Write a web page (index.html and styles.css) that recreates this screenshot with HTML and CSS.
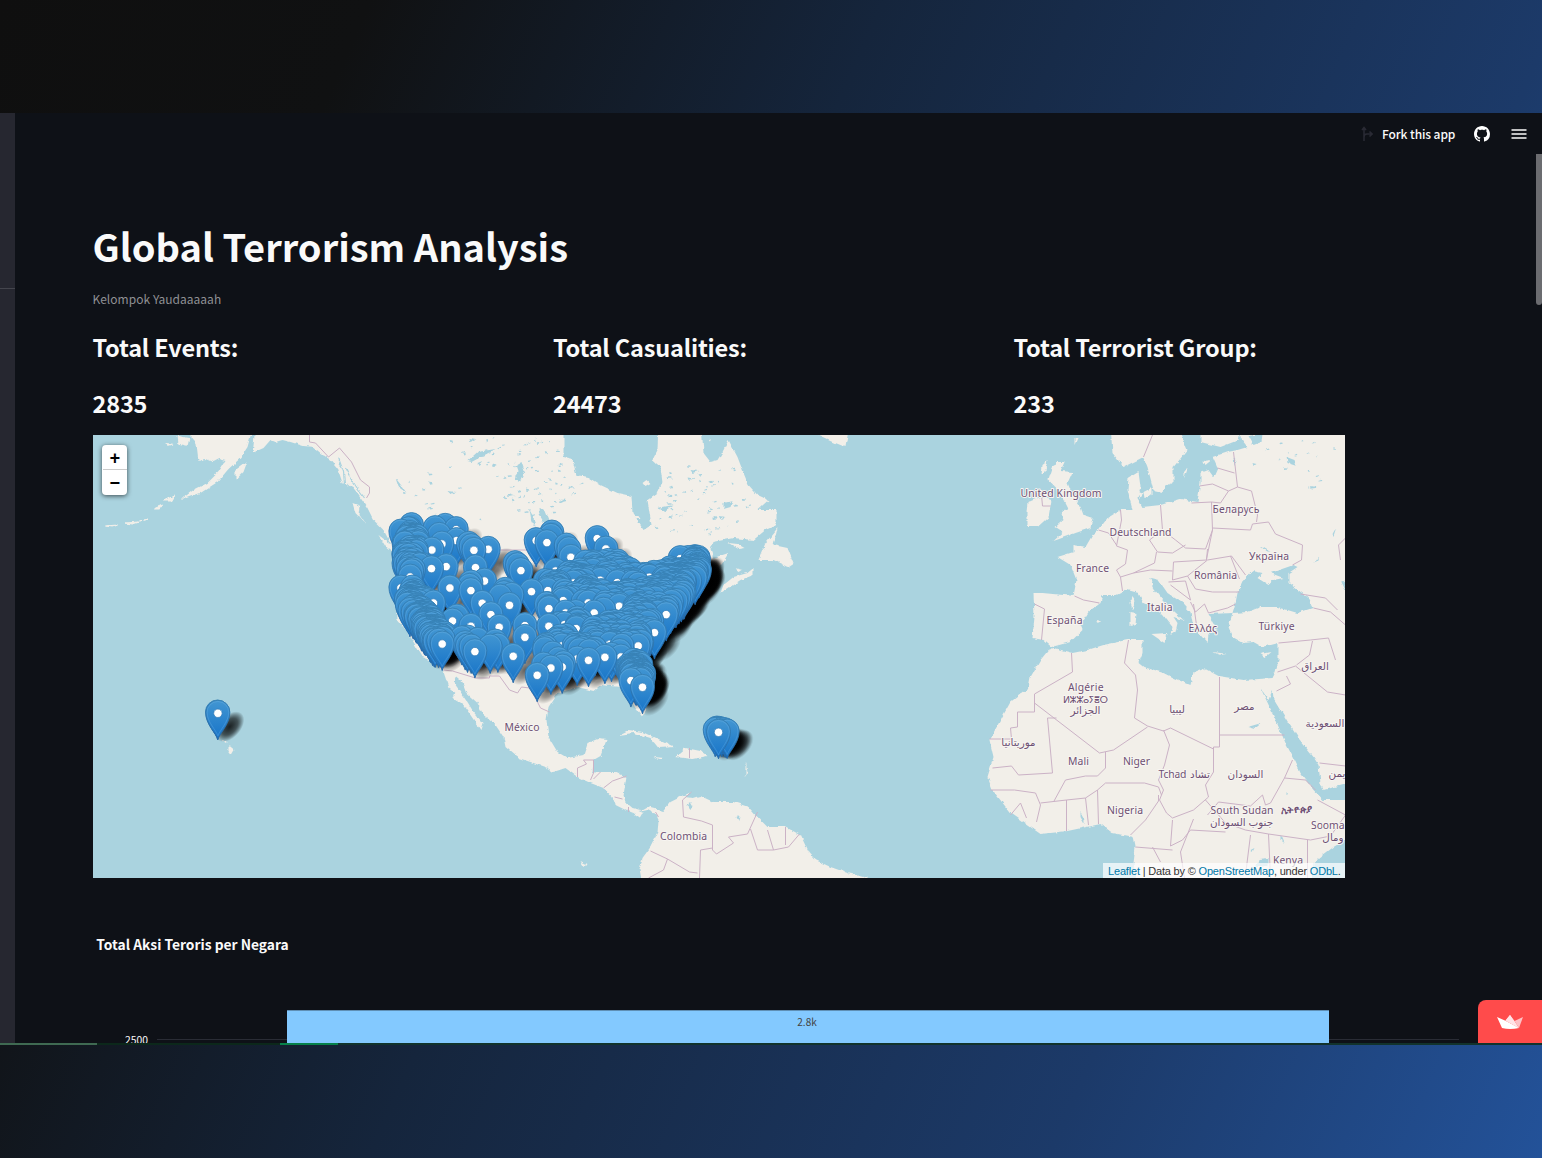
FILE: index.html
```html
<!DOCTYPE html>
<html lang="en">
<head>
<meta charset="utf-8">
<title>Global Terrorism Analysis</title>
<link rel="stylesheet" href="styles.css">
</head>
<body>
<div class="app">
  <aside class="sidebar"><div class="sidebar-rule"></div></aside>
  <div class="content">
    <header class="toolbar">
      <svg class="fork" viewBox="0 0 12 16"><path d="M3 15V2M1 4l2-2.500L5 4M3 11q0-3 3-3h4M8.500 5.500L11 8l-2.500 2.500"/></svg>
      <span class="fork-label">Fork this app</span>
      <svg class="github" viewBox="0 0 16 16"><path d="M8 0C3.580 0 0 3.580 0 8c0 3.540 2.290 6.530 5.470 7.590.4.070.55-.17.55-.38 0-.19-.01-.82-.01-1.490-2.010.37-2.530-.49-2.690-.94-.09-.23-.48-.94-.82-1.130-.28-.15-.68-.52-.01-.53.63-.01 1.080.58 1.230.82.72 1.210 1.870.87 2.330.66.07-.52.28-.87.51-1.070-1.780-.2-3.640-.89-3.640-3.950 0-.87.31-1.590.82-2.150-.08-.2-.36-1.020.08-2.120 0 0 .67-.21 2.200.82.64-.18 1.320-.27 2-.27s1.360.09 2 .27c1.530-1.040 2.200-.82 2.200-.82.44 1.100.16 1.920.08 2.120.51.56.82 1.270.82 2.150 0 3.070-1.870 3.750-3.650 3.950.29.25.54.73.54 1.480 0 1.070-.01 1.930-.01 2.200 0 .21.15.46.55.38A8.010 8.010 0 0 0 16 8c0-4.420-3.580-8-8-8z"/></svg>
      <svg class="menu" viewBox="0 0 16 12"><path d="M.5 2h15M.5 6h15M.5 10h15"/></svg>
    </header>
    <main class="main">
      <h1>Global Terrorism Analysis</h1>
      <p class="byline">Kelompok Yaudaaaaah</p>
      <section class="stats">
        <div><h3>Total Events:</h3><h3 class="num">2835</h3></div>
        <div><h3>Total Casualities:</h3><h3 class="num">24473</h3></div>
        <div><h3>Total Terrorist Group:</h3><h3 class="num">233</h3></div>
      </section>
      <div class="map">
        <svg class="map-canvas" viewBox="92.500 435 1252.500 443.500">
          <defs>
            <linearGradient id="pinFill" x1="0" y1="0" x2="0" y2="1"><stop offset="0" stop-color="#4296d2"/><stop offset="1" stop-color="#1673c8"/></linearGradient>
            <linearGradient id="pinEdge" x1="0" y1="0" x2="0" y2="1"><stop offset="0" stop-color="#3680b4"/><stop offset="1" stop-color="#2366a6"/></linearGradient>
            <radialGradient id="shade"><stop offset="0" stop-color="#000" stop-opacity=".6"/><stop offset=".55" stop-color="#000" stop-opacity=".38"/><stop offset="1" stop-color="#000" stop-opacity="0"/></radialGradient>
            <filter id="rough" x="0" y="0" width="1" height="1"><feTurbulence type="fractalNoise" baseFrequency=".16" numOctaves="3" seed="4"/><feDisplacementMap in="SourceGraphic" scale="4" xChannelSelector="R" yChannelSelector="G"/></filter>
            <g id="pinBody"><path d="M0 0C-1-6-12-15-12-27.500A12 12 0 0 1 12-27.500C12-15 1-6 0 0Z" fill="url(#pinFill)" stroke="url(#pinEdge)" stroke-width=".9"/><path d="M0-4C-2-10-10.800-18-10.800-27.500A10.800 10.800 0 0 1 10.800-27.500C10.800-18 2-10 0-4Z" fill="none" stroke="#8cc4ee" stroke-opacity=".3" stroke-width=".8"/></g>
            <g id="pin"><use href="#pinBody"/><circle cy="-26.500" r="4.200" fill="#fff" stroke="#2f79b5" stroke-width=".7"/></g>
            <ellipse id="cast" cx="12" cy="-13" rx="18" ry="11" transform="rotate(-48 12 -13)" fill="url(#shade)"/>
          </defs>
          <rect x="92" y="435" width="1254" height="444" fill="#aad3df"/>
          <g filter="url(#rough)">
            <g class="land">
              <path d="M190 425L190 437 196 444 198 461 205 459 212 462 218 459 225 461 218 472 207 483 193 490 180 500 200 493 217 482 228 469 240 458 247 447 250 436 254 436 252 453 263 448 270 440 275 442 282 440 290 442 303 446 313 447 320 453 330 460 337 468 342 483 353 488 360 498 367 508 373 520 383 530 390 543 395 580 397 620 407 632 422 657 435 662 443 672 448 687 455 693 453 699 463 705 472 718 480 730 482 723 473 712 467 702 460 692 453 682 455 676 462 682 466 693 477 703 483 715 495 725 503 737 505 747 518 758 533 763 547 768 553 772 565 768 577 777 590 783 603 788 612 797 615 805 625 810 633 813 640 818 643 813 638 811 647 809 655 813 658 820 657 833 650 847 642 858 639 870 643 890 868 890 868 878 847 873 830 867 815 860 808 852 800 835 785 827 767 827 755 815 748 807 733 802 713 802 700 796 693 798 685 797 691 792 680 797 670 802 662 812 655 808 647 806 640 810 632 808 625 802 623 795 626 777 615 772 597 772 592 773 593 760 600 756 606 740 597 739 587 743 583 755 567 758 557 752 548 737 546 720 548 707 557 693 577 687 593 691 600 685 620 687 628 697 635 708 642 717 645 712 642 695 645 665 660 635 680 610 700 585 713 575 722 563 728 553 713 558 710 550 713 542 733 538 753 540 765 530 776 525 776 510 757 510 768 500 757 495 748 485 743 473 737 457 728 440 722 452 717 460 710 462 703 453 701 425Z"/>
              <path d="M777 528L773 545 787 548 793 563 787 567 773 560 758 560 765 543ZM720 593L723 585 733 577 747 573 753 568 753 575 740 580 728 588ZM728 543l9 1 7 4-6 1zM734 568l8 2-3 2zM818 425V435L835 443 845 447 849 425ZM352 503l8 3-1 9 6 9-10-11zM378 535l12 9 6 12-10-8zM235 470l12-9-4 11-8 8zM166 443l7 1-6 2zM177 436l12 2-2 8-9-2zM222 740l4 1-1 2zM228 745l6 5-3 5-3-4zM207 733l3 2z"/>
              <path d="M618 735L628 730 643 732 660 740 675 747 658 748 650 738 633 733ZM675 757L685 748 700 751 707 756 692 759ZM653 757l11 1-5 2zM655 718l1 5zM678 730l2 4zM745 763l2 8-2 6zM748 785l1 7z"/>
              <path d="M163 501l10-5-3 5zM153 509l9-4-3 4zM105 526l12-1-5 2zM125 523l14-1-7 2zM140 521l8-2z" stroke="#f2efe9"/>
              <path d="M1055 462L1064 462 1060 471 1072 472 1067 483 1072 495 1080 507 1083 515 1092 518 1090 528 1075 533 1067 536 1053 541 1063 532 1055 527 1063 520 1060 513 1068 508 1063 498 1055 487 1048 480 1052 468ZM1028 502L1040 497 1051 500 1048 517 1037 527 1027 527 1027 513ZM1042 465l5-4-2 8-4 6zM1074 438l3 0-3 7z"/>
              <path d="M1110 425L1112 453 1123 467 1133 462 1143 457 1147 467 1153 490 1162 492 1167 485 1173 483 1173 467 1187 450 1177 425ZM1200 425V442L1220 447 1238 440 1242 425ZM1184 470l3-2-3 9zM1203 461l8-1-6 5zM1143 492l8-4 0 8-7 2zM1136 490l7 3-4 5z"/>
              <path d="M1033 593L1042 593 1073 596 1076 580 1070 565 1057 557 1073 552 1073 545 1085 547 1092 535 1098 530 1107 518 1120 510 1132 510 1127 490 1128 478 1138 472 1140 487 1137 498 1142 507 1160 505 1180 499 1197 502 1200 483 1200 473 1208 470 1213 477 1217 468 1212 457 1227 452 1237 450 1247 447 1240 438 1242 425 1360 425 1360 835 1345 840 1333 847 1320 857 1313 863 1310 890 1137 890 1133 863 1135 847 1133 837 1112 833 1100 824 1067 831 1040 834 1010 813 992 790 987 777 993 757 989 740 1000 720 1010 702 1028 688 1030 677 1040 660 1048 650 1053 648 1072 653 1087 650 1103 645 1127 640 1142 640 1142 653 1138 663 1143 667 1163 673 1173 678 1190 685 1193 672 1203 668 1218 676 1243 680 1272 678 1275 672 1278 660 1278 643 1262 647 1253 642 1243 643 1232 637 1228 627 1232 613 1208 614 1217 630 1208 633 1207 643 1198 633 1192 623 1190 612 1182 603 1167 593 1158 580 1150 578 1152 587 1160 597 1167 605 1183 620 1173 617 1177 623 1175 632 1170 635 1172 627 1160 612 1143 603 1138 593 1127 590 1117 595 1102 595 1100 602 1088 612 1080 625 1082 630 1070 642 1051 647 1043 640 1032 638 1034 617Z"/>
              <path d="M1132 597l3 5-3 7-2-6zM1130 612l6 1-1 12-5 1zM1151 634l16-1-3 10zM1212 652l14 2-6 1zM1260 654l10-2-6 5zM1096 621l5 1-4 2zM985 698l1 2zM995 700l2-2zM1000 694l3-3zM580 861l6 3-2 3z"/>
            </g>
            <g fill="#aad3df">
              <path d="M563 425V458L572 460 576 475 587 477 600 485 617 493 631 496 632 513 643 530 651 525 647 500 657 493 662 483 660 467 652 460 657 450 658 425Z"/>
              <path d="M538 508l6 2 4 10-3 5-6-10zM529 510l4 7 2 10-4-5zM467 461l10-9 18-3-9 5-15 8zM516 465l5-3 3 9-5 11-4-2 3-9zM395 478l7 9 4 6-8-6zM447 491l9 1-6 2zM477 463l5-2-4 4zM470 438l5 1-4 2zM657 508l16-3-9 6zM723 503l9-2-2 6-7 2zM690 470l8 1-6 2zM670 453l5-2zM718 516l7 1-5 2zM661 465l4 3zM507 493l6 2-5 1zM484 478l3 4zM480 497l4 3zM510 447l4 5z"/>
              <path d="M1252 571L1262 573 1257 578 1268 585 1273 580 1283 578 1270 573 1293 565 1297 567 1288 573 1288 583 1307 597 1312 608 1297 613 1277 607 1260 607 1247 612 1232 613 1235 603 1237 593 1243 580Z"/>
              <path d="M1260 688L1268 700 1272 690 1273 698 1288 723 1297 737 1313 757 1318 765 1320 783 1323 790 1360 780V800L1323 800 1313 790 1300 773 1295 762 1285 743 1273 715Z"/>
              <path d="M1286 457l8 3 2 6-9-3zM1252 463l4 1-3 2zM1248 436l14-2-1 8-8 3zM1341 582l12-5v30zM1318 556l-5 7 3-1zM1332 535l4-7-3 9zM1260 546l10 6-5-1zM1233 457l3 3-2 5zM1247 727l14-4-7 6zM1285 792l3 2-3 1zM1080 812l4 7 0 5-4-7zM1258 859l10-1 0 7-12 1zM1280 834l4 9-4-3zM1250 850l4-2-2 4zM689 801l3 5-2 4-3-4zM736 817l3-2-1 6z"/>
              <path id="lakes"/>
            </g>
            <path class="land" d="M642 483l4-3 4 4-5 3zM632 515l6 0 2 3-5 0zM709 440l2-1 0 3z"/>
            <path d="M338 458l5 14 1 12M345 468l6 12M350 478l8 12 6 8M347 484l10 10" fill="none" stroke="#aad3df" stroke-width="1.200"/>
          </g>
          <g class="border">
            <path d="M309 435V442L315 443 328 457 339 448 351 462 360 480 369 487V493L366 498M490 550H540M443 670L452 671 475 678H489V676L499 676 509 690 517 693 521 687 529 688 536 700 540 708 549 712M593 760L583 760 586 764 577 768 577 777M593 760V773L590 780M593 779L600 772M603 788L612 781 626 776M614 797L622 799M628 807V812M655 812L658 817M691 792L682 800 683 817 701 821 712 825 712 850 716 854 733 843 728 837 747 834 757 812M712 848L700 850 699 878M650 851L667 859 689 872 697 873M667 859L663 870 648 878M750 829L757 850 773 850 767 830M773 850L788 847 799 834M785 827V845M689 748V758"/>
            <path d="M1041 495L1042 506 1050 506M1152 435L1143 457M1120 510L1121 520 1116 546 1127 550 1125 564M1098 530L1108 533 1116 545M1160 505L1162 530 1149 540 1157 552 1172 553 1185 545M1162 530L1175 540 1185 548 1205 549 1212 530 1211 502 1191 503M1207 549L1206 560 1173 562 1172 580M1125 564L1116 570 1120 577 1133 573 1154 563 1156 552M1120 577L1122 591M1133 573L1150 570 1172 571M1199 486L1212 484 1228 491 1237 487 1251 491 1257 515 1256 522M1237 487L1233 452M1217 468L1234 473M1228 491L1220 503 1211 502M1212 528L1250 530 1252 524 1268 522 1275 534 1302 545 1301 560 1292 565M1206 559L1212 530M1207 560L1231 556 1245 575M1230 556L1239 579M1172 580L1187 576 1207 560M1187 576L1195 589 1212 592 1239 592M1168 582L1185 581 1190 600 1170 585M1190 602L1195 612 1204 604 1208 613 1227 608 1235 604M1193 604L1196 625M1074 596L1083 600 1099 603M1034 604L1044 609 1041 640M1300 594L1325 598 1337 610M1313 608L1330 612 1345 625M1278 643L1310 640 1328 638 1335 660M1128 640L1124 663 1135 675 1137 690 1134 718 1147 726 1163 731 1170 728 1213 749V747L1219 747V677M1219 735H1284M1213 749V772L1205 785 1208 797 1193 810 1172 818 1166 813 1159 800 1163 790 1158 780 1164 765 1169 745 1163 730M1147 727L1113 750 1099 753 1034 703M1105 752V768L1097 776 1085 776 1065 780 1053 802M1034 703V712H1017V727L1010 728 1011 739H989M1034 703V694L1072 672 1071 653M1056 718H1047L1052 773 1018 775 1011 766 992 768M990 790L1014 790 1035 793 1040 805 1036 822M1010 815L1020 803 1026 818M1040 803L1066 800 1066 831M1066 800L1085 798 1088 825M1085 798L1097 790 1098 824M1097 790L1105 783 1144 783 1158 787 1161 795M1158 795L1158 801 1145 820 1130 835M1205 800L1225 823 1245 830 1268 834 1270 878M1172 820L1170 846 1182 840M1135 847L1172 850M1182 840L1190 830 1225 832M1152 847L1160 862M1207 815L1218 802 1250 806 1262 795 1265 805 1270 803M1270 803L1284 778 1305 780 1315 790M1284 778L1292 760M1268 834L1310 840 1330 836 1345 815 1317 800M1277 672L1295 666 1327 692 1345 695M1296 665L1309 655 1312 641M1319 763L1345 766M1250 835L1245 875M1307 840V878M1193 819L1180 852 1184 878M1276 691L1290 684 1286 676M1345 538L1338 545 1340 560"/>
          </g>
          <g id="shadows"></g>
          <g id="pins"></g>
          <g class="labels" transform="translate(-.5 -.5)">
            <text x="1020.500" y="497.500" textLength="81">United Kingdom</text><text x="1109.500" y="536" textLength="62">Deutschland</text><text x="1212.500" y="513.500" textLength="47">Беларусь</text><text x="1249" y="560.500" textLength="40">Україна</text><text x="1194" y="579.500" textLength="43">România</text><text x="1076" y="572.500" textLength="33">France</text><text x="1147" y="611.500" textLength="25.500">Italia</text><text x="1046.500" y="624.500" textLength="36">España</text><text x="1188.500" y="632.500" textLength="28.500">Ελλάς</text><text x="1258.500" y="630.500" textLength="36">Türkiye</text>
            <text x="1068" y="691.500" textLength="35.500">Algérie</text><text x="1063" y="703" textLength="45" class="tif">ⵍⵣⵣⴰⵢⴻⵔ</text><text x="1085.500" y="714.500" class="mid">الجزائر</text><text x="1177" y="713.500" class="mid">ليبيا</text><text x="1244.500" y="710" class="mid">مصر</text><text x="1315" y="670.500" class="mid">العراق</text><text x="1325" y="727" class="mid">السعودية</text><text x="1018.500" y="746" class="mid">موريتانيا</text><text x="1068" y="765.500" textLength="21">Mali</text><text x="1123" y="765.500" textLength="27">Niger</text><text x="1158.500" y="778" textLength="28">Tchad</text><text x="1200" y="778" class="mid">تشاد</text><text x="1245.500" y="778.500" class="mid">السودان</text><text x="1337" y="777" class="mid">يمن</text><text x="1107" y="814.500" textLength="36">Nigeria</text><text x="1210.500" y="814.500" textLength="63">South Sudan</text><text x="1241.500" y="826.500" class="mid">جنوب السودان</text><text x="1281" y="813.500" textLength="31" class="eth">ኢትዮጵያ</text><text x="1311" y="829.500" textLength="33.500">Sooma</text><text x="1333" y="841" class="mid">ومال</text><text x="1273" y="864.500" textLength="30">Kenya</text><text x="504.500" y="731" textLength="35">México</text><text x="660" y="840.500" textLength="47">Colombia</text>
          </g>
        </svg>
        <div class="zoom"><span>+</span><span>−</span></div>
        <div class="credit"><a>Leaflet</a> | Data by © <a>OpenStreetMap</a>, under <a>ODbL</a>.</div>
      </div>
      <h4>Total Aksi Teroris per Negara</h4>
      <div class="chart">
        <div class="axis"><span>2500</span></div>
        <div class="grid"></div>
        <div class="bar">2.8k</div>
        <div class="grid"></div>
      </div>
    </main>
    <div class="scrollbar"></div>
    <div class="badge"><svg viewBox="0 0 26 14"><path d="M0 2L9 6 22 13Q13 15 5 13Z" fill="#fff"/><path d="M13 0L8.500 5.500 21 12.500Z" fill="#ffe3e6"/><path d="M13 0L17.500 6 22 13 8.500 5.500Z" fill="#ffe3e6"/><path d="M26 2L17.500 6 22 13Z" fill="#ffc1c5"/></svg></div>
  </div>
</div>
<div class="taskline"><i class="t1"></i><i class="t2"></i><i class="t3"></i><i class="t4"></i></div>
<script src="map.js"></script>
</body>
</html>
```
FILE: styles.css
```css
* { box-sizing: border-box; }
body {
  margin: 0;
  height: 1158px;
  padding-top: 113px;
  overflow: hidden;
  background: linear-gradient(114deg, #0f0f0f 0%, #101112 18%, #15253c 43%, #1c3a69 76%, #235299 100%);
  color: #fafafa;
  font-family: "Noto Sans CJK SC", "Noto Sans", sans-serif;
}
.app { display: flex; height: 930px; background: #0e1117; overflow: hidden; }
.sidebar { width: 15px; background: #262730; padding-top: 175px; }
.sidebar-rule { height: 1px; background: #44454d; }
.content { flex: 1; position: relative; }
.toolbar { height: 42px; display: flex; align-items: center; justify-content: flex-end; padding-right: 15px; }
.fork { width: 12px; height: 16px; fill: none; stroke: #292a34; stroke-width: 1.6; margin-right: 9px; }
.fork-label { font-size: 12px; line-height: 20px; width: 74px; white-space: nowrap; font-weight: 500; letter-spacing: -.1px; }
.github { width: 16px; height: 16px; fill: #fff; margin: 0 21px 0 18px; }
.menu { width: 16px; height: 12px; stroke: #fafafa; stroke-width: 1.6; }
.main { padding: 65px 0 0 77.5px; }
h1, h3, h4, p { margin: 0; white-space: nowrap; }
h1 { font-size: 38px; line-height: 52px; font-weight: 700; }
.byline { margin-top: 17px; font-size: 12px; line-height: 20px; color: #8f9094; letter-spacing: .03px; }
.stats { display: grid; grid-template-columns: 460.5px 460.5px 1fr; margin-top: 20px; }
h3 { font-size: 23.5px; line-height: 36px; font-weight: 600; letter-spacing: -.17px; }
.num { margin-top: 20px; }
.map { position: relative; width: 1252.5px; height: 443.5px; margin-top: 13.5px; overflow: hidden; }
.map-canvas { display: block; width: 100%; height: 100%; }
.land { fill: #f2efe9; }
.border { fill: none; stroke: #cbb2c6; stroke-width: 1; stroke-linejoin: round; }
.labels { font-family: "Noto Sans", "DejaVu Sans", sans-serif; font-size: 10.4px; fill: #6e5074; stroke: #f7f5f1; stroke-width: 2px; paint-order: stroke; stroke-linejoin: round; }
.mid { text-anchor: middle; }
.tif { font-size: 9.6px; }
.eth { font-weight: 600; }
.zoom { position: absolute; left: 9.5px; top: 10px; width: 25px; height: 50px; border-radius: 4px; background: #fff; box-shadow: 0 1px 5px rgba(0,0,0,.65); color: #000; font: bold 18px/28px "Liberation Mono", monospace; display: flex; flex-direction: column; text-align: center; padding-left: 1px; }
.zoom span { height: 25px; }
.zoom span:first-child { border-bottom: 1px solid #ccc; }
.credit { position: absolute; right: 0; bottom: 0; width: 242px; padding-left: 5px; height: 15px; background: rgba(255,255,255,.7); color: #333; font: 11px/16px "Liberation Sans", Arial, sans-serif; white-space: nowrap; letter-spacing: -.18px; }
.credit a { color: #0078a8; }
h4 { margin: 54.5px 0 0 3.8px; font-size: 13.8px; line-height: 22px; font-weight: 700; letter-spacing: 0; }
.chart { display: flex; height: 35px; margin-top: 55px; padding-left: 32px; }
.axis { width: 32.5px; font-size: 10.3px; line-height: 14px; padding: 23.5px 0 0 .5px; }
.grid { width: 130px; height: 1px; margin-top: 29px; background: #292c35; }
.bar { width: 1042px; height: 40px; background: #83c9ff; border-top: 1px solid #5f8fb5; color: #444; font-size: 10px; line-height: 21px; text-align: center; padding-right: 2px; }
.scrollbar { position: absolute; right: 0; top: 41px; width: 6px; height: 151px; background: #6b6c70; border-radius: 0 0 3px 3px; }
.badge { position: absolute; right: 0; bottom: 0; width: 64px; height: 43px; background: #ff4b4b; border-radius: 8px 0 0 0; padding: 15px 0 0 19px; }
.badge svg { display: block; width: 26px; height: 14px; }
.taskline { display: flex; height: 2px; }
.t1 { width: 97px; background: #3f6a52; }
.t2 { width: 183px; background: #0c281b; }
.t3 { width: 58px; background: #06814a; }
.t4 { flex: 1; background: #12332c; }
```
FILE: map.js
```js
// Pin head positions in thirds of a pixel from the (380, 500) map corner.
const heads = [[185,131],[229,121],[155,149],[281,150],[324,147],[500,127],[572,171],[651,115],[154,205],[198,199],[286,202],[422,211],[313,242],[209,263],[272,271],[454,274],[306,309],[388,315],[332,343],[357,381],[217,362],[506,325],[549,301],[642,338],[624,308],[717,318],[506,378],[588,385],[434,411],[353,437],[399,468],[186,431],[284,454],[774,437],[858,343],[625,480],[674,471],[512,503],[471,525],[787,561],[1015,696]];
// Heads that neighbouring pins partly cover.
const partial = [[228,88],[468,121],[677,146],[90,230],[503,271],[160,308],[272,378],[434,376],[556,338],[580,248],[660,240],[711,247],[526,212],[553,373],[545,437],[689,432],[823,397],[591,476],[722,470],[546,500],[752,541],[900,175],[62,263],[807,231]];
const single = [[62,95],[90,112],[165,85],[195,78],[177,105],[265,132],[273,139],[94,76],[515,98],[512,108],[558,137],[566,148],[405,190],[412,196],[375,270],[371,280],[360,290],[395,285],[272,248],[268,258],[230,350],[245,415],[255,430],[262,437],[273,440],[330,440],[345,425],[490,494],[535,478],[550,490],[1005,690],[1010,686],[1025,690],[1033,691],[1038,694],[1041,695],[1012,689],[1017,687],[-488,638],[685,183],[712,185],[915,208],[92,277],[262,413],[293,420],[97,263],[663,274],[714,281],[530,247],[558,408],[694,465],[812,265],[582,283]];
const areas = [
  [60, [[75,95],[100,76],[112,110],[118,160],[128,205],[100,220],[65,210],[72,150],[66,110]]],
  [130, [[66,272],[105,272],[145,300],[150,345],[185,400],[215,400],[195,420],[160,425],[110,355],[80,320]]],
  [420, [[490,240],[530,210],[600,190],[660,178],[705,185],[780,228],[830,210],[900,195],[955,170],[960,205],[945,245],[900,290],[858,340],[820,390],[790,430],[730,455],[600,455],[500,470],[485,440],[540,400],[500,340],[490,280]]],
  [70, [[905,175],[955,170],[962,200],[940,245],[900,280],[840,270],[800,260]]],
  [60, [[740,470],[775,475],[792,520],[785,555],[760,545],[735,490]]]
];
let seed = 11;
const rnd = () => (seed = (seed * 16807) % 2147483647) / 2147483647;
const inside = (x, y, p) => {
  let hit = false;
  for (let i = 0, j = p.length - 1; i < p.length; j = i++) {
    if ((p[i][1] > y) !== (p[j][1] > y) && x < (p[j][0] - p[i][0]) * (y - p[i][1]) / (p[j][1] - p[i][1]) + p[i][0]) hit = !hit;
  }
  return hit;
};
const covers = (list, x, y, r) => list.some(h => y > h[1] && Math.hypot(x - h[0], y - h[1]) < r);
const pins = heads.concat(partial).map(h => [h[0], h[1], 'pin']).concat(single.map(h => [h[0], h[1], 'pinBody']));
pins.push([-487, 639, 'pin']);
for (const [count, poly] of areas) {
  const xs = poly.map(p => p[0]), ys = poly.map(p => p[1]);
  const x0 = Math.min(...xs), x1 = Math.max(...xs), y0 = Math.min(...ys), y1 = Math.max(...ys);
  for (let n = 0, tries = 0; n < count && tries < 9000; tries++) {
    const x = x0 + rnd() * (x1 - x0), y = y0 + rnd() * (y1 - y0);
    if (inside(x, y, poly) && !covers(heads, x, y, 46) && !covers(partial, x, y, 36)) { pins.push([x, y, 'pinBody']); n++; }
  }
}
pins.sort((a, b) => a[1] - b[1]);
const mark = (x, y, id) => `<use href="#${id}" x="${(379.7 + x / 3).toFixed(1)}" y="${(526.8 + y / 3).toFixed(1)}"/>`;
document.getElementById('shadows').innerHTML = pins.map(p => mark(p[0], p[1], 'cast')).join('');
document.getElementById('pins').innerHTML = pins.map(p => mark(p[0], p[1], p[2])).join('');

// Small northern lakes.
const lakeAreas = [
  [90, [[430,437],[560,437],[562,462],[580,485],[560,515],[520,515],[470,470]]],
  [60, [[662,470],[690,462],[735,465],[750,505],[740,530],[700,535],[655,530],[655,500]]],
  [14, [[375,470],[450,460],[480,520],[420,515]]],
  [16, [[1260,440],[1335,440],[1335,500],[1270,470]]]
];
let lakes = '';
for (const [count, poly] of lakeAreas) {
  const xs = poly.map(p => p[0]), ys = poly.map(p => p[1]);
  for (let n = 0; n < count;) {
    const x = Math.min(...xs) + rnd() * (Math.max(...xs) - Math.min(...xs));
    const y = Math.min(...ys) + rnd() * (Math.max(...ys) - Math.min(...ys));
    if (!inside(x, y, poly)) continue;
    const w = 1 + rnd() * 3, h = rnd() * 3 - 2;
    lakes += `M${x.toFixed(1)} ${y.toFixed(1)}l${w.toFixed(1)} ${h.toFixed(1)} .6 1.2-${w.toFixed(1)} .5z`;
    n++;
  }
}
document.getElementById('lakes').setAttribute('d', lakes);
```
